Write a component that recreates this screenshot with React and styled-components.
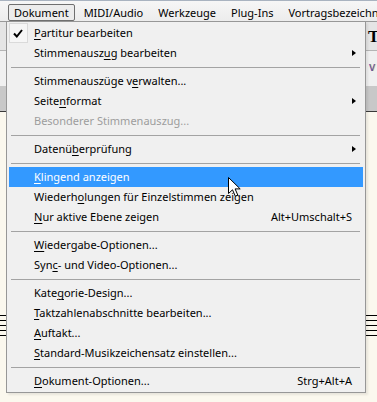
import styled, { createGlobalStyle } from "styled-components";

const GlobalStyle = createGlobalStyle`
  html, body {
    margin: 0;
    padding: 0;
    background: #fbf8ee;
  }
  body {
    font-family: "Noto Sans", "Open Sans", sans-serif;
    font-size: 11px;
    color: #000;
  }
`;

const menuItems = [
  { label: "Partitur bearbeiten", key: 0, checked: true },
  { label: "Stimmenauszug bearbeiten", key: 11, submenu: true },
  { sep: true },
  { label: "Stimmenauszüge verwalten...", key: 16 },
  { label: "Seitenformat", key: 5, submenu: true },
  { label: "Besonderer Stimmenauszug...", disabled: true },
  { sep: true },
  { label: "Datenüberprüfung", key: 6, submenu: true },
  { sep: true },
  { label: "Klingend anzeigen", key: 0, active: true },
  { label: "Wiederholungen für Einzelstimmen zeigen", key: 7 },
  { label: "Nur aktive Ebene zeigen", key: 0, shortcut: "Alt+Umschalt+S" },
  { sep: true },
  { label: "Wiedergabe-Optionen...", key: 0 },
  { label: "Sync- und Video-Optionen...", key: 3 },
  { sep: true },
  { label: "Kategorie-Design...", key: 4 },
  { label: "Taktzahlenabschnitte bearbeiten...", key: 0 },
  { label: "Auftakt...", key: 0 },
  { label: "Standard-Musikzeichensatz einstellen...", key: 0 },
  { sep: true },
  { label: "Dokument-Optionen...", key: 0, shortcut: "Strg+Alt+A" },
];

const barItems = ["Dokument", "MIDI/Audio", "Werkzeuge", "Plug-Ins", "Vortragsbezeichnungen"];

function Label({ text, index }) {
  if (index === undefined) return text;
  return (
    <>
      {text.slice(0, index)}
      <u>{text[index]}</u>
      {text.slice(index + 1)}
    </>
  );
}

function App() {
  return (
    <>
      <GlobalStyle />
      <Screen>
        <MenuBar>
          {barItems.map((name, i) => (
            <BarItem key={name} $open={i === 0}>
              {name}
            </BarItem>
          ))}
        </MenuBar>
        <ToolRow>
          <ToolGlyph>T</ToolGlyph>
        </ToolRow>
        <ToolRowLight>
          <SmallGlyph>v</SmallGlyph>
        </ToolRowLight>
        <RulerBand />
        <Paper>
          <Staff>
            {[0, 1, 2, 3, 4].map((n) => (
              <StaffLine key={n} />
            ))}
          </Staff>
        </Paper>

        <Dropdown>
          {menuItems.map((item, i) =>
            item.sep ? (
              <Separator key={i} />
            ) : (
              <Item key={i} $active={item.active} $disabled={item.disabled}>
                <CheckCell>
                  {item.checked && (
                    <CheckBox>
                      <svg width="10" height="9" viewBox="0 0 10 9">
                        <path d="M1 4.5 L3.8 7.5 L9 1" fill="none" stroke="#000" strokeWidth="2" />
                      </svg>
                    </CheckBox>
                  )}
                </CheckCell>
                <span>
                  <Label text={item.label} index={item.key} />
                </span>
                {item.shortcut && <Shortcut>{item.shortcut}</Shortcut>}
                {item.submenu && <SubArrow />}
              </Item>
            )
          )}
        </Dropdown>

        <Cursor width="13" height="20" viewBox="0 0 13 20">
          <path
            d="M0.5 0.5 V16.5 L4.5 12.8 L7.3 19.2 L9.8 18.1 L7.1 11.9 H12.2 Z"
            fill="#fff"
            stroke="#000"
            strokeWidth="1"
            strokeLinejoin="miter"
          />
        </Cursor>
      </Screen>
    </>
  );
}

export default App;

const Screen = styled.div`
  position: relative;
  width: 377px;
  height: 402px;
  overflow: hidden;
  background: #fbf8ee;
`;

const MenuBar = styled.div`
  display: flex;
  gap: 3px;
  height: 21px;
  box-sizing: border-box;
  padding: 3px 0 0 8px;
  border-top: 1px solid #a9b3c0;
  background: linear-gradient(#f6f6f6, #ececec);
  white-space: nowrap;
  font-size: 11px;
`;

const BarItem = styled.div`
  display: flex;
  align-items: center;
  height: 17px;
  box-sizing: border-box;
  padding: 0 5px 1px;
  border: 1px solid ${(p) => (p.$open ? "#6f6f6f" : "transparent")};
  border-radius: 2px;
  background: ${(p) => (p.$open ? "#ececec" : "transparent")};
  flex-shrink: 0;
`;

const ToolRow = styled.div`
  height: 30px;
  box-sizing: border-box;
  border-top: 1px solid #9a9a9a;
  border-bottom: 1px solid #b4b4b4;
  background: #e5e5e5;
  padding: 8px 0 0 368px;
`;

const ToolGlyph = styled.div`
  font-family: "Liberation Serif", serif;
  font-weight: bold;
  font-size: 17px;
  line-height: 14px;
`;

const ToolRowLight = styled.div`
  height: 35px;
  box-sizing: border-box;
  background: #f0f0f0;
  padding: 10px 0 0 369px;
`;

const SmallGlyph = styled.div`
  font-family: "Liberation Sans", sans-serif;
  font-size: 12px;
  line-height: 12px;
  color: #5a4aa8;
  text-shadow: 1px 0 0 rgba(200, 170, 40, 0.6);
`;

const RulerBand = styled.div`
  height: 26px;
  box-sizing: border-box;
  background: #c8c8c8;
  border-bottom: 1px solid #3a3a3a;
`;

const Paper = styled.div`
  background: #fbf8ee;
  padding-top: 203px;
`;

const Staff = styled.div`
  display: flex;
  flex-direction: column;
  gap: 4px;
`;

const StaffLine = styled.div`
  height: 1px;
  background: #000;
`;

const Dropdown = styled.div`
  position: absolute;
  left: 6px;
  top: 21px;
  width: 360px;
  box-sizing: border-box;
  padding: 1px 2px;
  border: 1px solid #979797;
  background: #f0f0f0;
  box-shadow: 2px 2px 2px rgba(0, 0, 0, 0.08);
  white-space: nowrap;
`;

const Item = styled.div`
  display: flex;
  align-items: center;
  height: 20px;
  padding-right: 7px;
  background: ${(p) => (p.$active ? "#3399ff" : "transparent")};
  color: ${(p) => (p.$active ? "#fff" : p.$disabled ? "#9d9d9d" : "#000")};

  & > span:nth-child(2) {
    flex: 1;
    padding-bottom: 1px;
  }
  u {
    text-decoration-thickness: 1px;
    text-underline-offset: 2px;
  }
`;

const CheckCell = styled.div`
  width: 25px;
  height: 20px;
  flex-shrink: 0;
`;

const CheckBox = styled.div`
  width: 19px;
  height: 20px;
  box-sizing: border-box;
  border: 1px solid #dadada;
  background: #f6f6f6;
  display: flex;
  align-items: center;
  justify-content: center;
  padding: 0 2px 0 0;
`;

const Shortcut = styled.span`
  margin-right: 4px;
  padding-bottom: 1px;
`;

const SubArrow = styled.span`
  width: 0;
  height: 0;
  border-top: 3.5px solid transparent;
  border-bottom: 3.5px solid transparent;
  border-left: 4px solid #000;
`;

const Separator = styled.div`
  height: 8px;
  display: flex;
  align-items: center;
  padding: 0 3px 0 2px;

  &::after {
    content: "";
    flex: 1;
    height: 1px;
    background: #a3a3a3;
  }
`;

const Cursor = styled.svg`
  position: absolute;
  left: 228px;
  top: 177px;
`;
